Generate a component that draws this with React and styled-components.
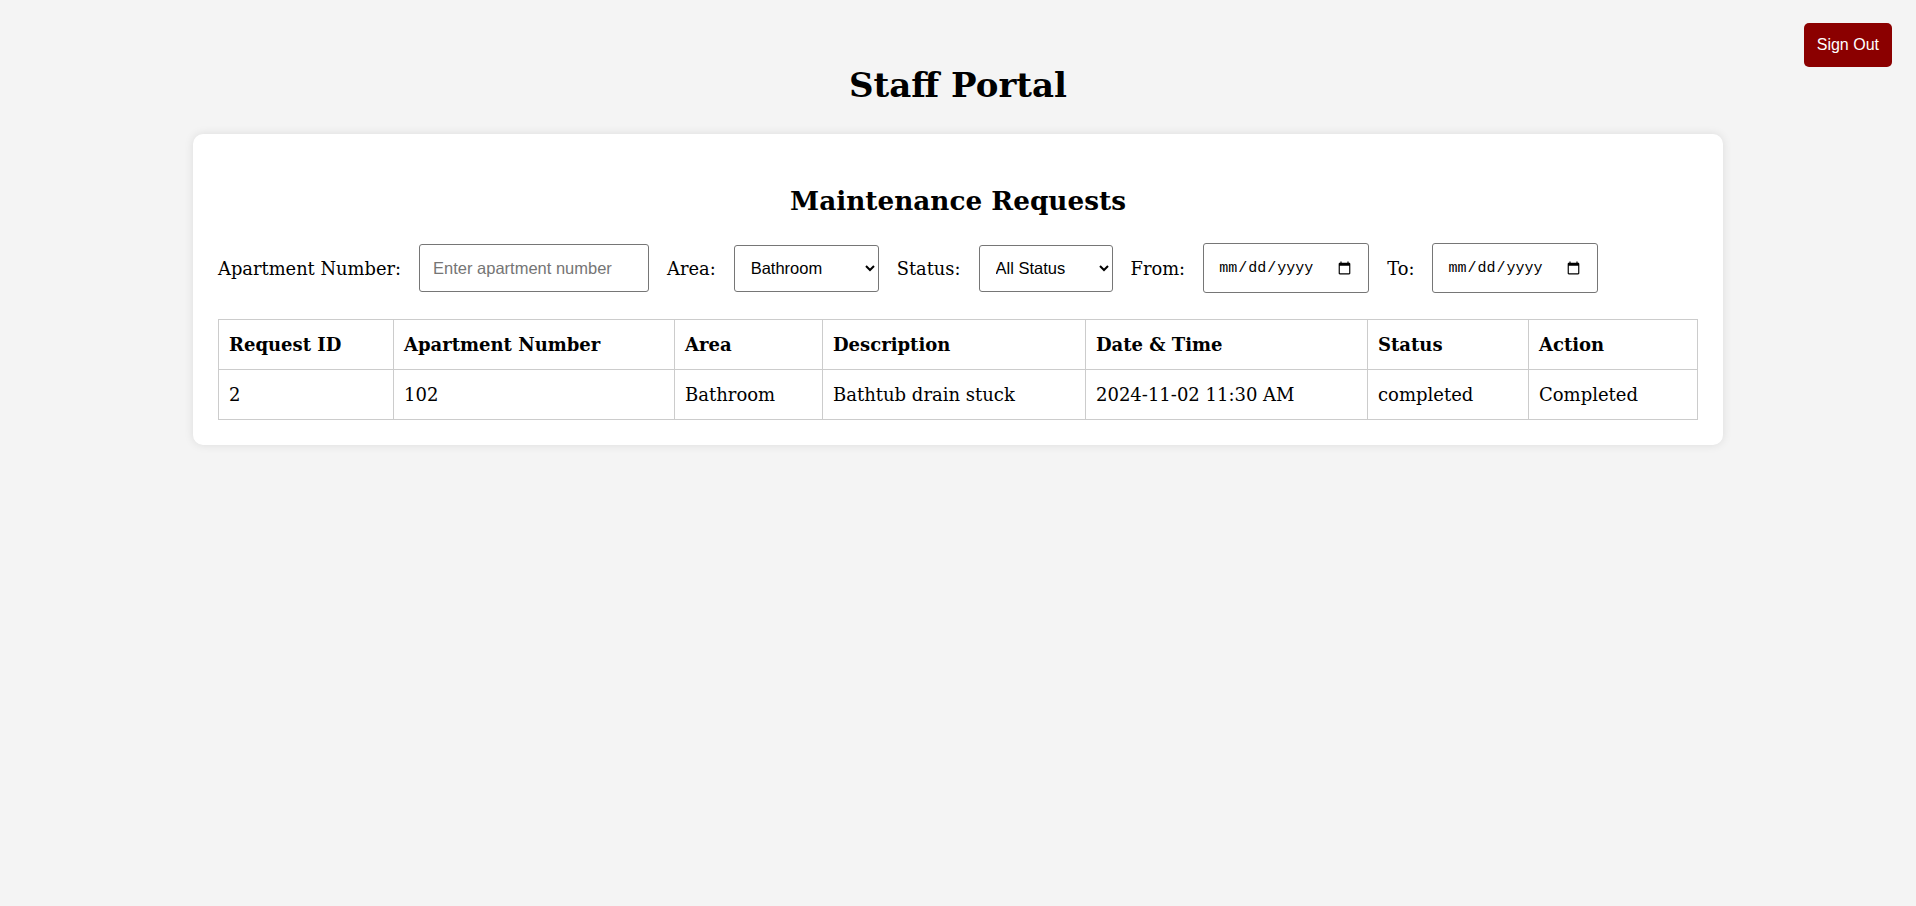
import React from "react";
import styled, { createGlobalStyle } from "styled-components";

const GlobalStyle = createGlobalStyle`
  body {
    margin: 0;
    background-color: #f4f4f4;
    font-family: "DejaVu Serif", "Liberation Serif", serif;
    color: #000;
  }
`;

const requests = [
  {
    id: 2,
    apartment: "102",
    area: "Bathroom",
    description: "Bathtub drain stuck",
    date: "2024-11-02 11:30 AM",
    status: "completed",
    action: "Completed",
  },
];

const columns = [
  { label: "Request ID", width: 175 },
  { label: "Apartment Number", width: 281 },
  { label: "Area", width: 148 },
  { label: "Description", width: 263 },
  { label: "Date & Time", width: 282 },
  { label: "Status", width: 161 },
  { label: "Action", width: 169 },
];

export default function App() {
  return (
    <>
      <GlobalStyle />
      <Page>
        <SignOutButton>Sign Out</SignOutButton>
        <Title>Staff Portal</Title>
        <Card>
          <CardTitle>Maintenance Requests</CardTitle>
          <Filters>
            <Label>Apartment Number:</Label>
            <TextInput type="text" placeholder="Enter apartment number" />
            <Label>Area:</Label>
            <Select $width={145} defaultValue="Bathroom">
              <option>All Areas</option>
              <option>Bathroom</option>
              <option>Kitchen</option>
              <option>Bedroom</option>
            </Select>
            <Label>Status:</Label>
            <Select $width={134} defaultValue="all">
              <option value="all">All Status</option>
              <option value="pending">pending</option>
              <option value="completed">completed</option>
            </Select>
            <Label>From:</Label>
            <DateInput type="date" />
            <Label>To:</Label>
            <DateInput type="date" />
          </Filters>
          <Table>
            <thead>
              <tr>
                {columns.map((c) => (
                  <Th key={c.label} $width={c.width}>
                    {c.label}
                  </Th>
                ))}
              </tr>
            </thead>
            <tbody>
              {requests.map((r) => (
                <tr key={r.id}>
                  <Td>{r.id}</Td>
                  <Td>{r.apartment}</Td>
                  <Td>{r.area}</Td>
                  <Td>{r.description}</Td>
                  <Td>{r.date}</Td>
                  <Td>{r.status}</Td>
                  <Td>{r.action}</Td>
                </tr>
              ))}
            </tbody>
          </Table>
        </Card>
      </Page>
    </>
  );
}

const Page = styled.div`
  position: relative;
  padding-top: 63px;
  min-height: 843px;
`;

const SignOutButton = styled.button`
  position: absolute;
  top: 23px;
  right: 24px;
  height: 44px;
  padding: 0 13px;
  background-color: #8b0000;
  color: #fff;
  border: none;
  border-radius: 5px;
  font-family: "Liberation Sans", Arial, sans-serif;
  font-size: 16px;
  cursor: pointer;
`;

const Title = styled.h1`
  margin: 0 0 27px;
  text-align: center;
  font-size: 34px;
  line-height: 44px;
  font-weight: 700;
`;

const Card = styled.div`
  width: 1530px;
  margin: 0 auto;
  box-sizing: border-box;
  padding: 25px;
  background-color: #fff;
  border-radius: 10px;
  box-shadow: 0 0 10px rgba(0, 0, 0, 0.1);
`;

const CardTitle = styled.h2`
  margin: 22px 0 22px;
  text-align: center;
  font-size: 26.3px;
  line-height: 40px;
  font-weight: 700;
`;

const Filters = styled.div`
  display: flex;
  align-items: center;
  gap: 18px;
  margin-bottom: 26px;
`;

const Label = styled.label`
  font-size: 17.85px;
`;

const fieldBase = `
  box-sizing: border-box;
  border: 1px solid #767676;
  border-radius: 3px;
  background-color: #fff;
  color: #000;
  font-size: 16.5px;
`;

const TextInput = styled.input`
  ${fieldBase}
  width: 230px;
  height: 48px;
  padding: 0 13px;
  font-family: "Liberation Sans", Arial, sans-serif;

  &::placeholder {
    color: #757575;
  }
`;

const Select = styled.select`
  ${fieldBase}
  width: ${(p) => p.$width}px;
  height: 47px;
  padding: 0 8px 0 12px;
  font-family: "Liberation Sans", Arial, sans-serif;
`;

const DateInput = styled.input`
  ${fieldBase}
  width: 166px;
  height: 50px;
  padding: 0 14px;
  font-family: "Liberation Mono", monospace;
  font-size: 15px;
`;

const Table = styled.table`
  width: 100%;
  table-layout: fixed;
  border-collapse: collapse;
`;

const Th = styled.th`
  box-sizing: border-box;
  width: ${(p) => p.$width}px;
  padding: 12px 10px;
  line-height: 25px;
  border: 1px solid #ccc;
  text-align: left;
  font-size: 18px;
  font-weight: 700;
`;

const Td = styled.td`
  padding: 12px 10px;
  line-height: 25px;
  border: 1px solid #ccc;
  font-size: 18px;
`;
